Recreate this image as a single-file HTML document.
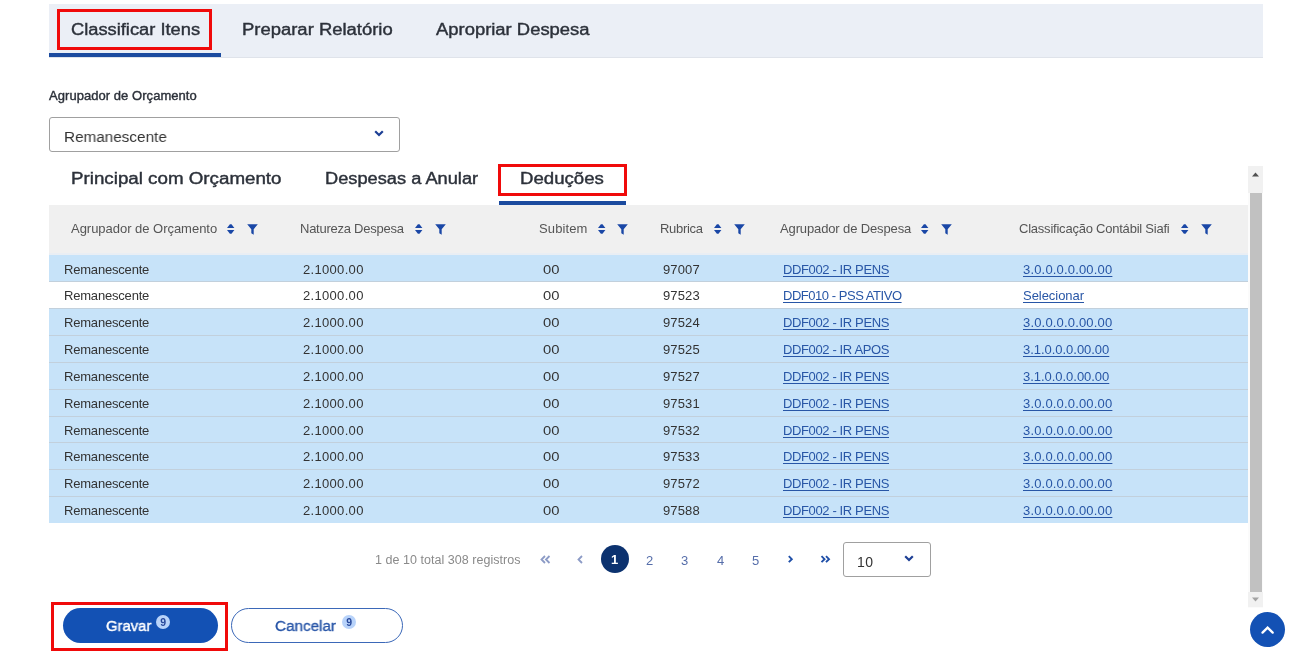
<!DOCTYPE html>
<html><head><meta charset="utf-8"><style>
html,body{margin:0;padding:0;background:#fff;width:1299px;height:661px;overflow:hidden;position:relative;font-family:"Liberation Sans",sans-serif;}
.t{position:absolute;white-space:nowrap;line-height:1;color:#333;will-change:transform;}
.ic{position:absolute;line-height:0;}
.ic svg{display:block}
.box{position:absolute;box-sizing:border-box;}
.semi{-webkit-text-stroke:0.4px currentColor;color:#2c313a;}
.hd{color:#555;}
.lk{color:#2856a6;text-decoration:underline;text-underline-offset:1.5px;text-decoration-thickness:1px;}
</style></head><body>
<div class="box" style="left:49px;top:4px;width:1214px;height:54px;background:#ebeff6;border-bottom:1px solid #dfe3ea"></div>
<div class="box" style="left:49px;top:52.5px;width:172px;height:4.5px;background:#1b4b9f"></div>
<div class="t semi" style="left:70.50px;top:21.66px;font-size:16px;transform:scaleX(1.143);transform-origin:0.0px 0;">Classificar Itens</div>
<div class="t semi" style="left:242.30px;top:21.66px;font-size:16px;transform:scaleX(1.153);transform-origin:0.0px 0;">Preparar Relatório</div>
<div class="t semi" style="left:436.30px;top:21.66px;font-size:16px;transform:scaleX(1.151);transform-origin:0.0px 0;">Apropriar Despesa</div>
<div class="box" style="left:56.5px;top:9px;width:155.5px;height:40.5px;border:3.8px solid #f00a0a"></div>
<div class="t semi" style="left:49.40px;top:89.00px;font-size:13px;letter-spacing:0.050px;">Agrupador de Orçamento</div>
<div class="box" style="left:49px;top:117px;width:351px;height:35px;border:1px solid #a0a0a0;border-radius:3px;background:#fff"></div>
<div class="t " style="left:64.20px;top:128.68px;font-size:15.5px;transform:scaleX(0.986);transform-origin:0.0px 0;">Remanescente</div>
<div class="ic" style="left:373.6px;top:130px"><svg width="10" height="7" viewBox="0 0 10 7"><path d="M1.2 1.2L5 5L8.8 1.2" stroke="#1d3f95" stroke-width="2.2" fill="none"/></svg></div>
<div class="t semi" style="left:70.70px;top:170.96px;font-size:16px;transform:scaleX(1.172);transform-origin:0.0px 0;">Principal com Orçamento</div>
<div class="t semi" style="left:324.70px;top:170.96px;font-size:16px;transform:scaleX(1.140);transform-origin:0.0px 0;">Despesas a Anular</div>
<div class="t semi" style="left:520.40px;top:170.96px;font-size:16px;transform:scaleX(1.164);transform-origin:0.0px 0;">Deduções</div>
<div class="box" style="left:499px;top:200.6px;width:127px;height:4.4px;background:#1b4b9f"></div>
<div class="box" style="left:497.6px;top:164.2px;width:129.4px;height:31.4px;border:3.1px solid #f00a0a"></div>
<div class="box" style="left:49px;top:205px;width:1199px;height:50px;background:#f0f0f0"></div>
<div class="box" style="left:49px;top:252.5px;width:1199px;height:2.5px;background:#e9eef4"></div>
<div class="t hd" style="left:70.50px;top:222.20px;font-size:13px;letter-spacing:-0.026px;">Agrupador de Orçamento</div>
<div class="ic" style="left:227.3px;top:223.5px"><svg width="8" height="10" viewBox="0 0 8 10"><path d="M2.9 0.3H4.5L7.4 4.1H0Z M0 5.9H7.4L4.5 9.7H2.9Z" fill="#1a47a6"/></svg></div>
<div class="ic" style="left:247px;top:223.8px"><svg width="11" height="11" viewBox="0 0 11 11"><path d="M0.2 0.3H10.8L6.7 5.2V10.7L4.3 9.3V5.2Z" fill="#1a47a6"/></svg></div>
<div class="t hd" style="left:300.00px;top:222.20px;font-size:13px;letter-spacing:-0.250px;">Natureza Despesa</div>
<div class="ic" style="left:415.1px;top:223.5px"><svg width="8" height="10" viewBox="0 0 8 10"><path d="M2.9 0.3H4.5L7.4 4.1H0Z M0 5.9H7.4L4.5 9.7H2.9Z" fill="#1a47a6"/></svg></div>
<div class="ic" style="left:434.7px;top:223.8px"><svg width="11" height="11" viewBox="0 0 11 11"><path d="M0.2 0.3H10.8L6.7 5.2V10.7L4.3 9.3V5.2Z" fill="#1a47a6"/></svg></div>
<div class="t hd" style="left:539.30px;top:222.20px;font-size:13px;letter-spacing:0.125px;">Subitem</div>
<div class="ic" style="left:597.8px;top:223.5px"><svg width="8" height="10" viewBox="0 0 8 10"><path d="M2.9 0.3H4.5L7.4 4.1H0Z M0 5.9H7.4L4.5 9.7H2.9Z" fill="#1a47a6"/></svg></div>
<div class="ic" style="left:617.4px;top:223.8px"><svg width="11" height="11" viewBox="0 0 11 11"><path d="M0.2 0.3H10.8L6.7 5.2V10.7L4.3 9.3V5.2Z" fill="#1a47a6"/></svg></div>
<div class="t hd" style="left:660.00px;top:222.20px;font-size:13px;letter-spacing:-0.312px;">Rubrica</div>
<div class="ic" style="left:713.5px;top:223.5px"><svg width="8" height="10" viewBox="0 0 8 10"><path d="M2.9 0.3H4.5L7.4 4.1H0Z M0 5.9H7.4L4.5 9.7H2.9Z" fill="#1a47a6"/></svg></div>
<div class="ic" style="left:733.5px;top:223.8px"><svg width="11" height="11" viewBox="0 0 11 11"><path d="M0.2 0.3H10.8L6.7 5.2V10.7L4.3 9.3V5.2Z" fill="#1a47a6"/></svg></div>
<div class="t hd" style="left:779.60px;top:222.20px;font-size:13px;letter-spacing:-0.129px;">Agrupador de Despesa</div>
<div class="ic" style="left:921.4px;top:223.5px"><svg width="8" height="10" viewBox="0 0 8 10"><path d="M2.9 0.3H4.5L7.4 4.1H0Z M0 5.9H7.4L4.5 9.7H2.9Z" fill="#1a47a6"/></svg></div>
<div class="ic" style="left:941.2px;top:223.8px"><svg width="11" height="11" viewBox="0 0 11 11"><path d="M0.2 0.3H10.8L6.7 5.2V10.7L4.3 9.3V5.2Z" fill="#1a47a6"/></svg></div>
<div class="t hd" style="left:1019.30px;top:222.20px;font-size:13px;letter-spacing:-0.224px;">Classificação Contábil Siafi</div>
<div class="ic" style="left:1180.8px;top:223.5px"><svg width="8" height="10" viewBox="0 0 8 10"><path d="M2.9 0.3H4.5L7.4 4.1H0Z M0 5.9H7.4L4.5 9.7H2.9Z" fill="#1a47a6"/></svg></div>
<div class="ic" style="left:1201px;top:223.8px"><svg width="11" height="11" viewBox="0 0 11 11"><path d="M0.2 0.3H10.8L6.7 5.2V10.7L4.3 9.3V5.2Z" fill="#1a47a6"/></svg></div>
<div class="box" style="left:49px;top:255px;width:1199px;height:26px;background:#c7e3f9;"></div>
<div class="t " style="left:63.60px;top:262.90px;font-size:13px;letter-spacing:-0.191px;">Remanescente</div>
<div class="t " style="left:302.50px;top:262.90px;font-size:13px;letter-spacing:0.316px;">2.1000.00</div>
<div class="t " style="left:542.60px;top:262.90px;font-size:13px;transform:scaleX(1.138);transform-origin:0.0px 0;">00</div>
<div class="t " style="left:663.00px;top:262.90px;font-size:13px;letter-spacing:0.119px;">97007</div>
<div class="t lk" style="left:782.60px;top:262.90px;font-size:13px;letter-spacing:-0.373px;">DDF002 - IR PENS</div>
<div class="t lk" style="left:1022.90px;top:262.90px;font-size:13px;letter-spacing:0.175px;">3.0.0.0.0.00.00</div>
<div class="box" style="left:49px;top:281px;width:1199px;height:27px;background:#fff;border-top:1px solid #c2d0dc;"></div>
<div class="t " style="left:63.60px;top:288.90px;font-size:13px;letter-spacing:-0.191px;">Remanescente</div>
<div class="t " style="left:302.50px;top:288.90px;font-size:13px;letter-spacing:0.316px;">2.1000.00</div>
<div class="t " style="left:542.60px;top:288.90px;font-size:13px;transform:scaleX(1.138);transform-origin:0.0px 0;">00</div>
<div class="t " style="left:663.00px;top:288.90px;font-size:13px;letter-spacing:0.119px;">97523</div>
<div class="t lk" style="left:782.60px;top:288.90px;font-size:13px;letter-spacing:-0.463px;">DDF010 - PSS ATIVO</div>
<div class="t lk" style="left:1022.90px;top:288.90px;font-size:13px;letter-spacing:-0.042px;">Selecionar</div>
<div class="box" style="left:49px;top:308px;width:1199px;height:27px;background:#c7e3f9;border-top:1px solid #c2d0dc;"></div>
<div class="t " style="left:63.60px;top:315.90px;font-size:13px;letter-spacing:-0.191px;">Remanescente</div>
<div class="t " style="left:302.50px;top:315.90px;font-size:13px;letter-spacing:0.316px;">2.1000.00</div>
<div class="t " style="left:542.60px;top:315.90px;font-size:13px;transform:scaleX(1.138);transform-origin:0.0px 0;">00</div>
<div class="t " style="left:663.00px;top:315.90px;font-size:13px;letter-spacing:0.119px;">97524</div>
<div class="t lk" style="left:782.60px;top:315.90px;font-size:13px;letter-spacing:-0.373px;">DDF002 - IR PENS</div>
<div class="t lk" style="left:1022.90px;top:315.90px;font-size:13px;letter-spacing:0.175px;">3.0.0.0.0.00.00</div>
<div class="box" style="left:49px;top:335px;width:1199px;height:27px;background:#c7e3f9;border-top:1px solid #c2d0dc;"></div>
<div class="t " style="left:63.60px;top:342.90px;font-size:13px;letter-spacing:-0.191px;">Remanescente</div>
<div class="t " style="left:302.50px;top:342.90px;font-size:13px;letter-spacing:0.316px;">2.1000.00</div>
<div class="t " style="left:542.60px;top:342.90px;font-size:13px;transform:scaleX(1.138);transform-origin:0.0px 0;">00</div>
<div class="t " style="left:663.00px;top:342.90px;font-size:13px;letter-spacing:0.119px;">97525</div>
<div class="t lk" style="left:782.60px;top:342.90px;font-size:13px;letter-spacing:-0.373px;">DDF002 - IR APOS</div>
<div class="t lk" style="left:1022.90px;top:342.90px;font-size:13px;letter-spacing:-0.032px;">3.1.0.0.0.00.00</div>
<div class="box" style="left:49px;top:362px;width:1199px;height:27px;background:#c7e3f9;border-top:1px solid #c2d0dc;"></div>
<div class="t " style="left:63.60px;top:369.90px;font-size:13px;letter-spacing:-0.191px;">Remanescente</div>
<div class="t " style="left:302.50px;top:369.90px;font-size:13px;letter-spacing:0.316px;">2.1000.00</div>
<div class="t " style="left:542.60px;top:369.90px;font-size:13px;transform:scaleX(1.138);transform-origin:0.0px 0;">00</div>
<div class="t " style="left:663.00px;top:369.90px;font-size:13px;letter-spacing:0.119px;">97527</div>
<div class="t lk" style="left:782.60px;top:369.90px;font-size:13px;letter-spacing:-0.373px;">DDF002 - IR PENS</div>
<div class="t lk" style="left:1022.90px;top:369.90px;font-size:13px;letter-spacing:-0.032px;">3.1.0.0.0.00.00</div>
<div class="box" style="left:49px;top:389px;width:1199px;height:27px;background:#c7e3f9;border-top:1px solid #c2d0dc;"></div>
<div class="t " style="left:63.60px;top:396.90px;font-size:13px;letter-spacing:-0.191px;">Remanescente</div>
<div class="t " style="left:302.50px;top:396.90px;font-size:13px;letter-spacing:0.316px;">2.1000.00</div>
<div class="t " style="left:542.60px;top:396.90px;font-size:13px;transform:scaleX(1.138);transform-origin:0.0px 0;">00</div>
<div class="t " style="left:663.00px;top:396.90px;font-size:13px;letter-spacing:0.119px;">97531</div>
<div class="t lk" style="left:782.60px;top:396.90px;font-size:13px;letter-spacing:-0.373px;">DDF002 - IR PENS</div>
<div class="t lk" style="left:1022.90px;top:396.90px;font-size:13px;letter-spacing:0.175px;">3.0.0.0.0.00.00</div>
<div class="box" style="left:49px;top:416px;width:1199px;height:26px;background:#c7e3f9;border-top:1px solid #c2d0dc;"></div>
<div class="t " style="left:63.60px;top:423.90px;font-size:13px;letter-spacing:-0.191px;">Remanescente</div>
<div class="t " style="left:302.50px;top:423.90px;font-size:13px;letter-spacing:0.316px;">2.1000.00</div>
<div class="t " style="left:542.60px;top:423.90px;font-size:13px;transform:scaleX(1.138);transform-origin:0.0px 0;">00</div>
<div class="t " style="left:663.00px;top:423.90px;font-size:13px;letter-spacing:0.119px;">97532</div>
<div class="t lk" style="left:782.60px;top:423.90px;font-size:13px;letter-spacing:-0.373px;">DDF002 - IR PENS</div>
<div class="t lk" style="left:1022.90px;top:423.90px;font-size:13px;letter-spacing:0.175px;">3.0.0.0.0.00.00</div>
<div class="box" style="left:49px;top:442px;width:1199px;height:27px;background:#c7e3f9;border-top:1px solid #c2d0dc;"></div>
<div class="t " style="left:63.60px;top:449.90px;font-size:13px;letter-spacing:-0.191px;">Remanescente</div>
<div class="t " style="left:302.50px;top:449.90px;font-size:13px;letter-spacing:0.316px;">2.1000.00</div>
<div class="t " style="left:542.60px;top:449.90px;font-size:13px;transform:scaleX(1.138);transform-origin:0.0px 0;">00</div>
<div class="t " style="left:663.00px;top:449.90px;font-size:13px;letter-spacing:0.119px;">97533</div>
<div class="t lk" style="left:782.60px;top:449.90px;font-size:13px;letter-spacing:-0.373px;">DDF002 - IR PENS</div>
<div class="t lk" style="left:1022.90px;top:449.90px;font-size:13px;letter-spacing:0.175px;">3.0.0.0.0.00.00</div>
<div class="box" style="left:49px;top:469px;width:1199px;height:27px;background:#c7e3f9;border-top:1px solid #c2d0dc;"></div>
<div class="t " style="left:63.60px;top:476.90px;font-size:13px;letter-spacing:-0.191px;">Remanescente</div>
<div class="t " style="left:302.50px;top:476.90px;font-size:13px;letter-spacing:0.316px;">2.1000.00</div>
<div class="t " style="left:542.60px;top:476.90px;font-size:13px;transform:scaleX(1.138);transform-origin:0.0px 0;">00</div>
<div class="t " style="left:663.00px;top:476.90px;font-size:13px;letter-spacing:0.119px;">97572</div>
<div class="t lk" style="left:782.60px;top:476.90px;font-size:13px;letter-spacing:-0.373px;">DDF002 - IR PENS</div>
<div class="t lk" style="left:1022.90px;top:476.90px;font-size:13px;letter-spacing:0.175px;">3.0.0.0.0.00.00</div>
<div class="box" style="left:49px;top:496px;width:1199px;height:27.200000000000045px;background:#c7e3f9;border-top:1px solid #c2d0dc;"></div>
<div class="t " style="left:63.60px;top:503.90px;font-size:13px;letter-spacing:-0.191px;">Remanescente</div>
<div class="t " style="left:302.50px;top:503.90px;font-size:13px;letter-spacing:0.316px;">2.1000.00</div>
<div class="t " style="left:542.60px;top:503.90px;font-size:13px;transform:scaleX(1.138);transform-origin:0.0px 0;">00</div>
<div class="t " style="left:663.00px;top:503.90px;font-size:13px;letter-spacing:0.119px;">97588</div>
<div class="t lk" style="left:782.60px;top:503.90px;font-size:13px;letter-spacing:-0.373px;">DDF002 - IR PENS</div>
<div class="t lk" style="left:1022.90px;top:503.90px;font-size:13px;letter-spacing:0.175px;">3.0.0.0.0.00.00</div>
<div class="t " style="left:374.50px;top:553.52px;font-size:12.5px;letter-spacing:0.038px;color:#8a8a8a">1 de 10 total 308 registros</div>
<div class="ic" style="left:539.5px;top:554.5px"><svg width="11" height="9" viewBox="0 0 11 9"><path d="M5 1L1.5 4.5L5 8M9.5 1L6 4.5L9.5 8" stroke="#8c9bc6" stroke-width="1.8" fill="none"/></svg></div>
<div class="ic" style="left:576.5px;top:554.5px"><svg width="7" height="9" viewBox="0 0 7 9"><path d="M5 1L1.5 4.5L5 8" stroke="#8c9bc6" stroke-width="1.8" fill="none"/></svg></div>
<div class="box" style="left:601px;top:545px;width:28px;height:28px;border-radius:50%;background:#0c326f"></div>
<div class="t " style="left:611.00px;top:553.30px;font-size:13px;font-weight:bold;color:#fff">1</div>
<div class="t " style="left:646.10px;top:553.60px;font-size:13px;color:#566eaa">2</div>
<div class="t " style="left:681.30px;top:553.60px;font-size:13px;color:#566eaa">3</div>
<div class="t " style="left:716.50px;top:553.60px;font-size:13px;color:#566eaa">4</div>
<div class="t " style="left:751.70px;top:553.60px;font-size:13px;color:#566eaa">5</div>
<div class="ic" style="left:786.5px;top:555px"><svg width="7" height="9" viewBox="0 0 7 9"><path d="M1.8 1.2L4.8 4.2L1.8 7.2" stroke="#1f4fa8" stroke-width="1.9" fill="none"/></svg></div>
<div class="ic" style="left:820px;top:555px"><svg width="11" height="9" viewBox="0 0 11 9"><path d="M1.5 1.2L4.5 4.2L1.5 7.2M6 1.2L9 4.2L6 7.2" stroke="#1f4fa8" stroke-width="1.9" fill="none"/></svg></div>
<div class="box" style="left:843px;top:542px;width:88px;height:35px;border:1px solid #a0a0a0;border-radius:3px;background:#fff"></div>
<div class="t " style="left:857.40px;top:554.55px;font-size:14px;letter-spacing:0.375px;">10</div>
<div class="ic" style="left:904.3px;top:554.8px"><svg width="10" height="7" viewBox="0 0 10 7"><path d="M1.2 1.2L5 5L8.8 1.2" stroke="#1d3f95" stroke-width="2.2" fill="none"/></svg></div>
<div class="box" style="left:1248px;top:166px;width:15px;height:442px;background:#fbfbfb"></div>
<div class="box" style="left:1248px;top:166px;width:15px;height:27px;background:#f1f1f1"></div>
<div class="box" style="left:1248px;top:592px;width:15px;height:15px;background:#f1f1f1"></div>
<div class="box" style="left:1250px;top:193px;width:12px;height:399px;background:#c1c1c1"></div>
<div class="ic" style="left:1251px;top:172px"><svg width="9" height="5" viewBox="0 0 9 5"><path d="M4.5 0.5L8 4.5H1Z" fill="#505050"/></svg></div>
<div class="ic" style="left:1251px;top:597px"><svg width="9" height="5" viewBox="0 0 9 5"><path d="M4.5 4.5L8 0.5H1Z" fill="#a3a3a3"/></svg></div>
<div class="box" style="left:1250px;top:612px;width:35px;height:35px;border-radius:50%;background:#1351b4"></div>
<div class="ic" style="left:1261.2px;top:625.8px"><svg width="13" height="8" viewBox="0 0 13 8"><path d="M1.5 6.6L6.6 1.6L11.7 6.6" stroke="#fff" stroke-width="2.3" stroke-linecap="round" fill="none"/></svg></div>
<div class="box" style="left:63px;top:607.5px;width:155px;height:35.5px;border-radius:18px;background:#1351b4"></div>
<div class="t " style="left:105.80px;top:618.38px;font-size:15.5px;transform:scaleX(0.958);transform-origin:0.0px 0;color:#fff;-webkit-text-stroke:0.45px #fff">Gravar</div>
<div class="box" style="left:156px;top:614.8px;width:14.2px;height:14.2px;border-radius:50%;background:#b8d3fa;display:flex;align-items:center;justify-content:center;color:#26479a;font-size:10.5px;font-weight:bold;line-height:1;padding-top:0px;will-change:transform">9</div>
<div class="box" style="left:231px;top:607.5px;width:172px;height:35.5px;border-radius:18px;border:1px solid #3b68b8;background:#fff"></div>
<div class="t " style="left:275.00px;top:618.38px;font-size:15.5px;transform:scaleX(0.984);transform-origin:0.0px 0;color:#2856a8;-webkit-text-stroke:0.35px #2856a8">Cancelar</div>
<div class="box" style="left:342.2px;top:614.8px;width:14.2px;height:14.2px;border-radius:50%;background:#b8d3fa;display:flex;align-items:center;justify-content:center;color:#26479a;font-size:10.5px;font-weight:bold;line-height:1;padding-top:0px;will-change:transform">9</div>
<div class="box" style="left:51px;top:601.5px;width:177px;height:49px;border:3px solid #f00a0a"></div>
</body></html>
